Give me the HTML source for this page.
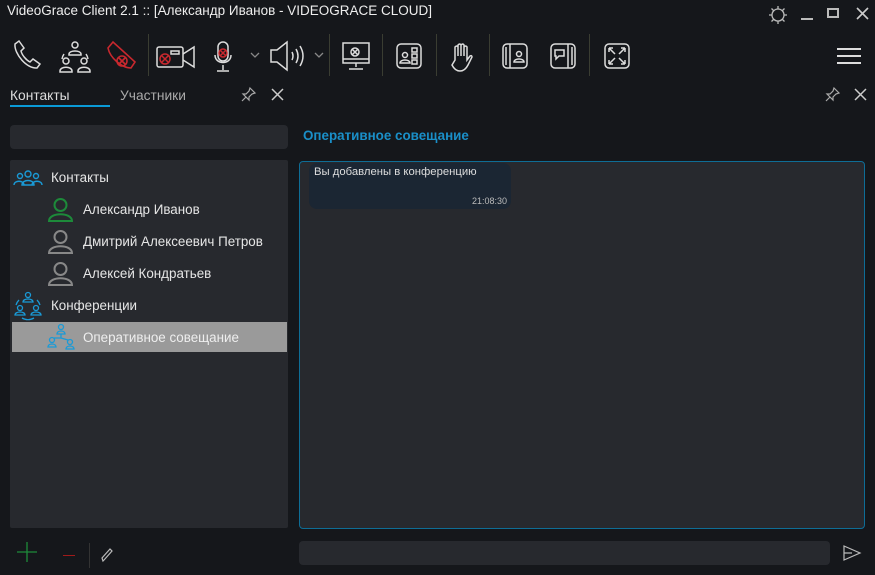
<!DOCTYPE html>
<html><head><meta charset="utf-8"><style>
*{margin:0;padding:0;box-sizing:border-box}
body{width:875px;height:575px;background:#15171b;font-family:"Liberation Sans","DejaVu Sans",sans-serif;color:#e6e6e6;position:relative;overflow:hidden}
.a{position:absolute}
.sep{position:absolute;top:34px;width:1px;height:42px;background:#3a3d32}
svg{position:absolute;overflow:visible}
.t{font-size:13.4px;white-space:nowrap}
</style></head><body>
<div class="a t" style="left:7px;top:3px;font-size:13.5px;color:#eee">VideoGrace Client 2.1 :: [Александр Иванов - VIDEOGRACE CLOUD]</div>
<svg style="left:768px;top:5px" width="20" height="20" viewBox="0 0 20 20" fill="none" stroke="#bbb" stroke-width="1.3"><circle cx="10" cy="10" r="6"/><path d="M10 1v3M10 16v3M1 10h3M16 10h3M3.5 3.5l2 2M14.5 14.5l2 2M3.5 16.5l2-2M14.5 5.5l2-2"/></svg>
<div class="a" style="left:801px;top:18px;width:12px;height:2px;background:#bbb"></div>
<div class="a" style="left:827px;top:8px;width:12px;height:10px;border:2px solid #bbb"></div>
<svg style="left:857px;top:8px" width="11" height="11" fill="none" stroke="#ccc" stroke-width="1.6"><path d="M0 0l11 11M11 0L0 11"/></svg>
<svg style="left:11px;top:40px" width="30" height="32" viewBox="0 0 30 32" fill="none" stroke="#ddd" stroke-width="1.5"><path d="M4 4l4-3 5 7-3 3c1 4 5 9 9 11l3-3 7 5-3 4c-10 1-23-14-22-24z"/></svg>
<svg style="left:58px;top:40px" width="34" height="34" fill="none" stroke="#ddd" stroke-width="1.5"><circle cx="17" cy="5" r="3"/><path d="M11 14c0-4 12-4 12 0v1H11z"/><circle cx="8" cy="21" r="3"/><path d="M2 31c0-5 12-5 12 0v1H2z"/><circle cx="26" cy="21" r="3"/><path d="M20 31c0-5 12-5 12 0v1H20z"/><path d="M6 14a12 12 0 0 0-2 5M28 14a12 12 0 0 1 2 5"/></svg>
<svg style="left:106px;top:40px" width="32" height="34" fill="none" stroke="#c8282e" stroke-width="1.6"><path d="M2 8l5-6 22 20-4 6C16 28 4 18 2 8z"/><circle cx="16" cy="21" r="5"/><path d="M13 18l6 6M19 18l-6 6"/></svg>
<div class="sep" style="left:148px"></div>
<svg style="left:156px;top:44px" width="40" height="26" fill="none" stroke="#ddd" stroke-width="1.5"><rect x="1" y="3" width="26" height="20" rx="2"/><path d="M27 10l11-7v20l-11-7"/><rect x="15" y="7" width="8" height="3"/><circle cx="9" cy="15" r="5" stroke="#c8282e"/><path d="M6 12l6 6M12 12l-6 6" stroke="#c8282e"/></svg>
<svg style="left:212px;top:40px" width="22" height="34" fill="none" stroke="#ddd" stroke-width="1.5"><rect x="6" y="2" width="10" height="19" rx="5"/><path d="M3 15c0 10 16 10 16 0M11 25v5M5 31h12"/><circle cx="11" cy="13" r="4" stroke="#c8282e"/><path d="M8 10l6 6M14 10l-6 6" stroke="#c8282e"/></svg>
<svg style="left:250px;top:52px" width="10" height="6" fill="none" stroke="#888" stroke-width="1.3"><path d="M1 1l4 4 4-4"/></svg>
<svg style="left:270px;top:41px" width="36" height="30" fill="none" stroke="#ddd" stroke-width="1.5"><path d="M1 9h6l10-8v28l-10-8H1z"/><path d="M22 11q2 4 0 8M26 8q4 7 0 14M30 5q6 10 0 20"/></svg>
<svg style="left:314px;top:52px" width="10" height="6" fill="none" stroke="#888" stroke-width="1.3"><path d="M1 1l4 4 4-4"/></svg>
<div class="sep" style="left:329px"></div>
<svg style="left:342px;top:42px" width="28" height="30" fill="none" stroke="#ddd" stroke-width="1.5"><rect x="1" y="1" width="26" height="20"/><path d="M1 17h26M14 21v4M7 27h14"/><circle cx="13" cy="10" r="4"/><path d="M10 7l6 6M16 7l-6 6"/></svg>
<div class="sep" style="left:382px"></div>
<svg style="left:396px;top:43px" width="26" height="26" fill="none" stroke="#ddd" stroke-width="1.5"><rect x="1" y="1" width="24" height="24" rx="4"/><circle cx="9" cy="12" r="2.5"/><path d="M4 20c0-4 10-4 10 0z"/><rect x="16" y="5" width="5" height="4"/><rect x="16" y="11" width="5" height="4"/><rect x="16" y="17" width="5" height="4"/></svg>
<div class="sep" style="left:436px"></div>
<svg style="left:451px;top:42px" width="22" height="30" fill="none" stroke="#ddd" stroke-width="1.5"><path d="M4 18V5q2-2 3 0v9V3q2-2 3 0v11V3q2-2 3 0v11V5q2-2 3 0v13l3-4q2-1 2 1l-4 8q-3 6-8 6t-8-6z"/></svg>
<div class="sep" style="left:489px"></div>
<svg style="left:502px;top:43px" width="26" height="26" fill="none" stroke="#ddd" stroke-width="1.5"><rect x="1" y="1" width="24" height="24" rx="4"/><path d="M8 1v24M4 4v18"/><circle cx="17" cy="11" r="2.5"/><path d="M12 19c0-4 10-4 10 0z"/></svg>
<svg style="left:550px;top:43px" width="26" height="26" fill="none" stroke="#ddd" stroke-width="1.5"><rect x="1" y="1" width="24" height="24" rx="4"/><path d="M18 1v24M22 4v18"/><path d="M5 7h9v6H9l-3 3v-3H5z"/></svg>
<div class="sep" style="left:589px"></div>
<svg style="left:604px;top:43px" width="26" height="26" fill="none" stroke="#ddd" stroke-width="1.5"><rect x="1" y="1" width="24" height="24" rx="4"/><path d="M5 5l6 6M5 5h4M5 5v4M21 5l-6 6M21 5h-4M21 5v4M5 21l6-6M5 21h4M5 21v-4M21 21l-6-6M21 21h-4M21 21v-4"/></svg>
<svg style="left:837px;top:47px" width="24" height="18" fill="none" stroke="#ddd" stroke-width="2"><path d="M0 2h24M0 9h24M0 16h24"/></svg>
<div class="a t" style="left:10px;top:88px;color:#ddd;font-size:13.8px">Контакты</div>
<div class="a" style="left:10px;top:105px;width:100px;height:2px;background:#0a9ad6"></div>
<div class="a t" style="left:120px;top:88px;color:#aaa;font-size:13.8px">Участники</div>
<svg style="left:242px;top:87px" width="14" height="14" fill="none" stroke="#aaa" stroke-width="1.2"><path d="M8 1l5 5-3 1-3 3v3l-6-6h3l3-3zM4 10l-4 4"/></svg>
<svg style="left:272px;top:89px" width="11" height="11" fill="none" stroke="#ccc" stroke-width="1.5"><path d="M0 0l11 11M11 0L0 11"/></svg>
<svg style="left:826px;top:87px" width="14" height="14" fill="none" stroke="#aaa" stroke-width="1.2"><path d="M8 1l5 5-3 1-3 3v3l-6-6h3l3-3zM4 10l-4 4"/></svg>
<svg style="left:855px;top:89px" width="11" height="11" fill="none" stroke="#ccc" stroke-width="1.5"><path d="M0 0l11 11M11 0L0 11"/></svg>
<div class="a" style="left:10px;top:125px;width:278px;height:24px;background:#27292e;border-radius:4px"></div>
<div class="a" style="left:10px;top:160px;width:278px;height:368px;background:#27292e;border-radius:2px"></div>
<div class="a" style="left:12px;top:322px;width:275px;height:30px;background:#9a9a9a"></div>
<svg style="left:13px;top:170px" width="30" height="16" fill="none" stroke="#1a9ad6" stroke-width="1.4"><circle cx="15" cy="4" r="3"/><circle cx="7" cy="6" r="2.5"/><circle cx="23" cy="6" r="2.5"/><path d="M9 15c0-6 12-6 12 0zM1 15c0-5 10-5 10 0M19 15c0-5 10-5 10 0"/></svg>
<div class="a t" style="left:51px;top:170px">Контакты</div>
<svg style="left:47px;top:197px" width="27" height="25" fill="none" stroke="#1d8a3a" stroke-width="2"><circle cx="13.5" cy="8" r="6"/><path d="M2 24c0-9 23-9 23 0z"/></svg>
<div class="a t" style="left:83px;top:202px">Александр Иванов</div>
<svg style="left:47px;top:229px" width="27" height="25" fill="none" stroke="#888" stroke-width="2"><circle cx="13.5" cy="8" r="6"/><path d="M2 24c0-9 23-9 23 0z"/></svg>
<div class="a t" style="left:83px;top:234px">Дмитрий Алексеевич Петров</div>
<svg style="left:47px;top:261px" width="27" height="25" fill="none" stroke="#888" stroke-width="2"><circle cx="13.5" cy="8" r="6"/><path d="M2 24c0-9 23-9 23 0z"/></svg>
<div class="a t" style="left:83px;top:266px">Алексей Кондратьев</div>
<svg style="left:14px;top:291px" width="28" height="28" fill="none" stroke="#1a9ad6" stroke-width="1.3"><circle cx="14" cy="4" r="2.5"/><path d="M9 11c0-4 10-4 10 0z"/><circle cx="6" cy="17" r="2.5"/><path d="M1 24c0-4 10-4 10 0z"/><circle cx="22" cy="17" r="2.5"/><path d="M17 24c0-4 10-4 10 0z"/><path d="M5 9a12 12 0 0 0-3 5M23 9a12 12 0 0 1 3 5M8 27a12 12 0 0 0 12 0"/></svg>
<div class="a t" style="left:51px;top:298px">Конференции</div>
<svg style="left:46px;top:323px" width="30" height="28" fill="none" stroke="#1a9ad6" stroke-width="1.3"><circle cx="15" cy="4" r="2.5"/><path d="M11 11c0-4 8-4 8 0z"/><circle cx="6" cy="17" r="2.5"/><path d="M2 24c0-4 8-4 8 0z"/><circle cx="24" cy="19" r="2.5"/><path d="M20 26c0-4 8-4 8 0z"/><path d="M15 11v4l-7 0M15 15l7 2"/></svg>
<div class="a t" style="left:83px;top:330px;color:#eee">Оперативное совещание</div>
<svg style="left:17px;top:542px" width="20" height="20" stroke="#1d8a3a" stroke-width="1.3"><path d="M10 0v20M0 10h20"/></svg>
<div class="a" style="left:63px;top:555px;width:12px;height:1px;background:#a01a1a"></div>
<div class="a" style="left:89px;top:543px;width:1px;height:25px;background:#333"></div>
<svg style="left:100px;top:548px" width="14" height="14" fill="none" stroke="#bbb" stroke-width="1.2"><path d="M3 13l-1-3 8-9 2 2-8 9z"/></svg>
<div class="a" style="left:303px;top:128px;font-size:13.4px;font-weight:bold;color:#1a8fc8">Оперативное совещание</div>
<div class="a" style="left:299px;top:161px;width:566px;height:368px;background:#27292e;border:1px solid #0e6d96;border-radius:4px"></div>
<div class="a" style="left:309px;top:163px;width:202px;height:46px;background:#1b2633;border-radius:8px"></div>
<div class="a" style="left:314px;top:166px;font-size:11.3px;color:#ddd">Вы добавлены в конференцию</div>
<div class="a" style="left:472px;top:196px;font-size:9px;color:#bbb">21:08:30</div>
<div class="a" style="left:299px;top:541px;width:531px;height:24px;background:#27292e;border-radius:4px"></div>
<svg style="left:843px;top:545px" width="18" height="16" fill="none" stroke="#bbb" stroke-width="1.2"><path d="M1 1l16 7-16 7zM1 8h8"/></svg>
</body></html>
